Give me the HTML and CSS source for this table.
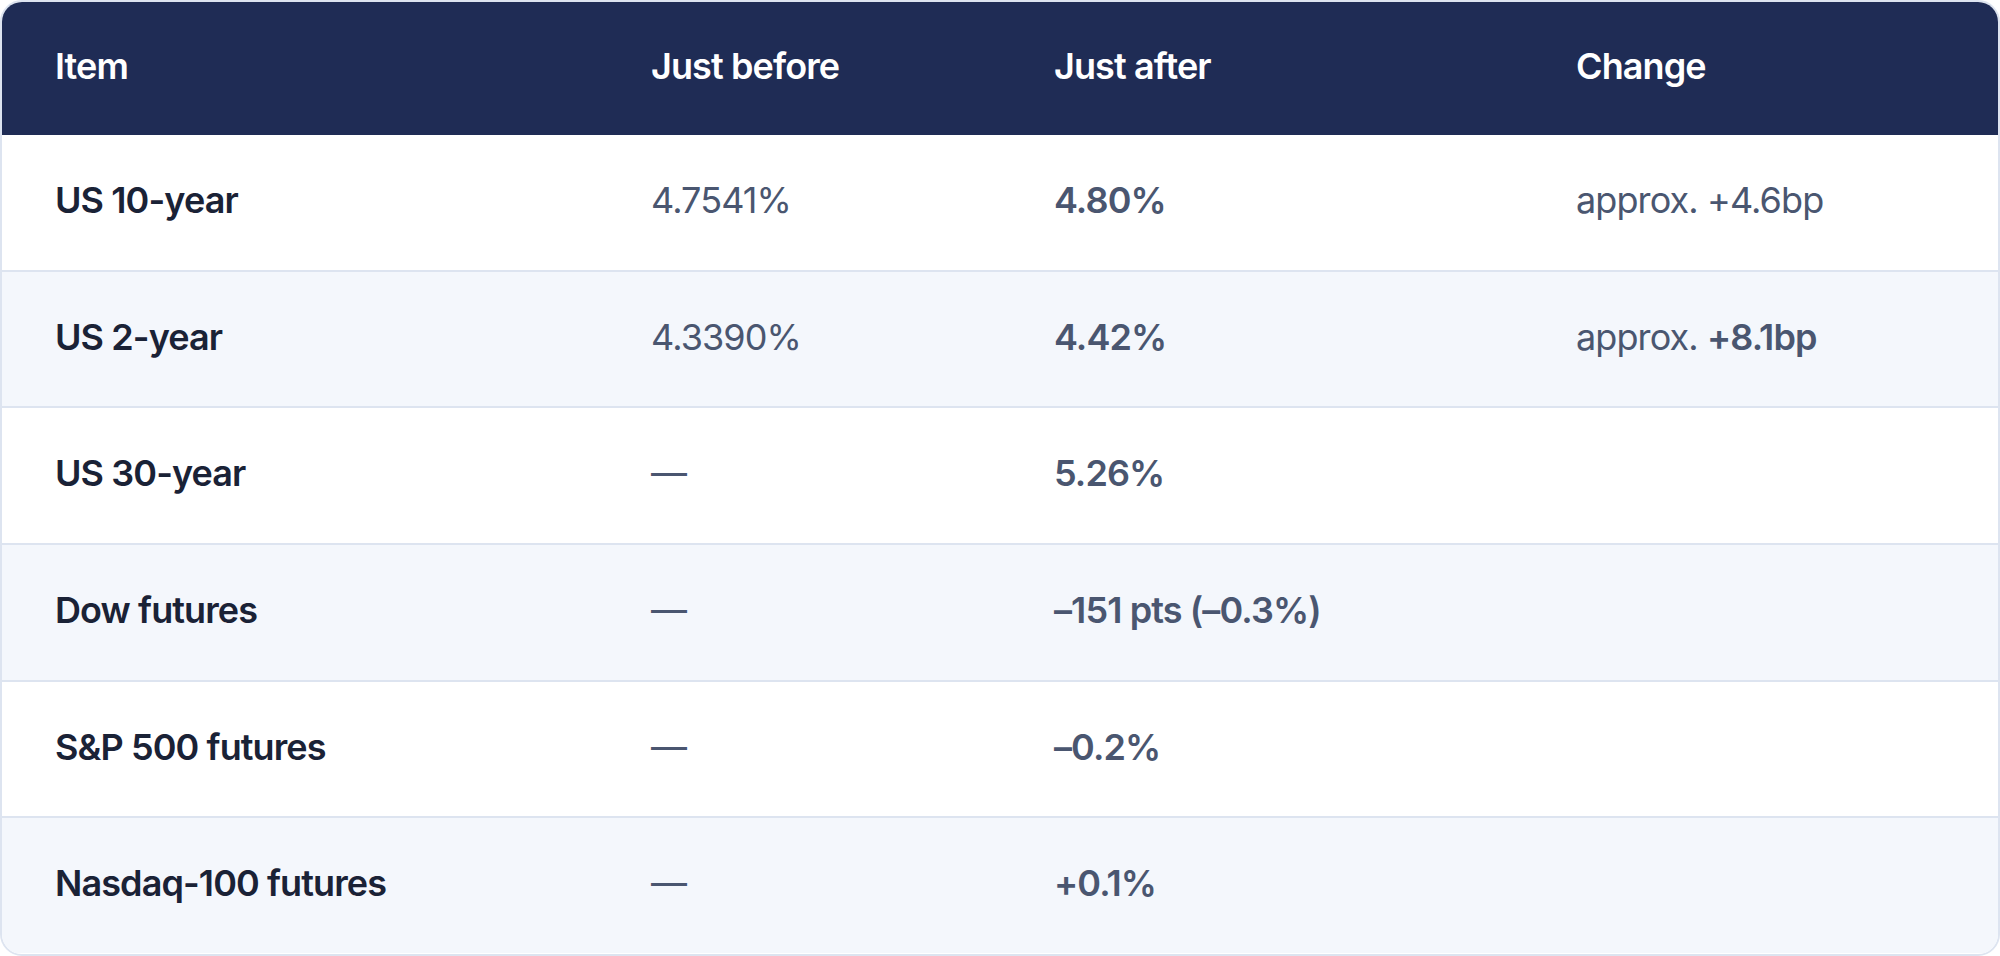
FILE: index.html
```html
<!DOCTYPE html>
<html lang="en">
<head>
<meta charset="utf-8">
<title>Market reaction</title>
<link rel="stylesheet" href="styles.css">
</head>
<body>
<div class="card">
  <table class="data">
    <colgroup>
      <col class="c1"><col class="c2"><col class="c3"><col class="c4">
    </colgroup>
    <thead>
      <tr><th>Item</th><th>Just before</th><th>Just after</th><th>Change</th></tr>
    </thead>
    <tbody>
      <tr><td class="lbl">US 10-year</td><td class="val">4.7541%</td><td class="val strong">4.80%</td><td class="val">approx. +4.6bp</td></tr>
      <tr><td class="lbl">US 2-year</td><td class="val">4.3390%</td><td class="val strong">4.42%</td><td class="val">approx. <b class="strong">+8.1bp</b></td></tr>
      <tr><td class="lbl">US 30-year</td><td class="val">—</td><td class="val strong">5.26%</td><td class="val"></td></tr>
      <tr><td class="lbl">Dow futures</td><td class="val">—</td><td class="val strong">–151 pts (–0.3%)</td><td class="val"></td></tr>
      <tr><td class="lbl">S&amp;P 500 futures</td><td class="val">—</td><td class="val strong">–0.2%</td><td class="val"></td></tr>
      <tr><td class="lbl">Nasdaq-100 futures</td><td class="val">—</td><td class="val strong">+0.1%</td><td class="val"></td></tr>
    </tbody>
  </table>
</div>
</body>
</html>
```

FILE: styles.css
```css
html, body {
  margin: 0;
  padding: 0;
  background: #ffffff;
}

body {
  font-family: Inter, "Noto Sans CJK KR", "Noto Sans", sans-serif;
  font-size: 36px;
  -webkit-font-smoothing: antialiased;
}

.card {
  width: 2000px;
  height: 956px;
  box-sizing: border-box;
  border: 2px solid #dde4f0;
  border-radius: 22px;
  overflow: hidden;
  background: #ffffff;
}

.data {
  width: 100%;
  table-layout: fixed;
  border-collapse: separate;
  border-spacing: 0;
}

.c1 { width: 596px; }
.c2 { width: 403px; }
.c3 { width: 522px; }
.c4 { width: auto; }

.data th {
  background: #1f2c55;
  color: #ffffff;
  font-weight: 600;
  text-align: left;
  line-height: 54px;
  padding: 37px 53px 42px;
  letter-spacing: -0.9px;
}

.data td {
  line-height: 54px;
  padding: 38px 53px 42.7px;
  border-top: 2px solid #dde4f0;
  letter-spacing: -0.9px;
  white-space: nowrap;
}

.data tbody tr:first-child td {
  border-top: 0;
}

.data tbody tr:nth-child(even) td {
  background: #f4f7fc;
}

.lbl {
  color: #1a2236;
  font-weight: 600;
}

.val {
  color: #4a5670;
  font-weight: 400;
}

.strong {
  font-weight: 600;
}
```
